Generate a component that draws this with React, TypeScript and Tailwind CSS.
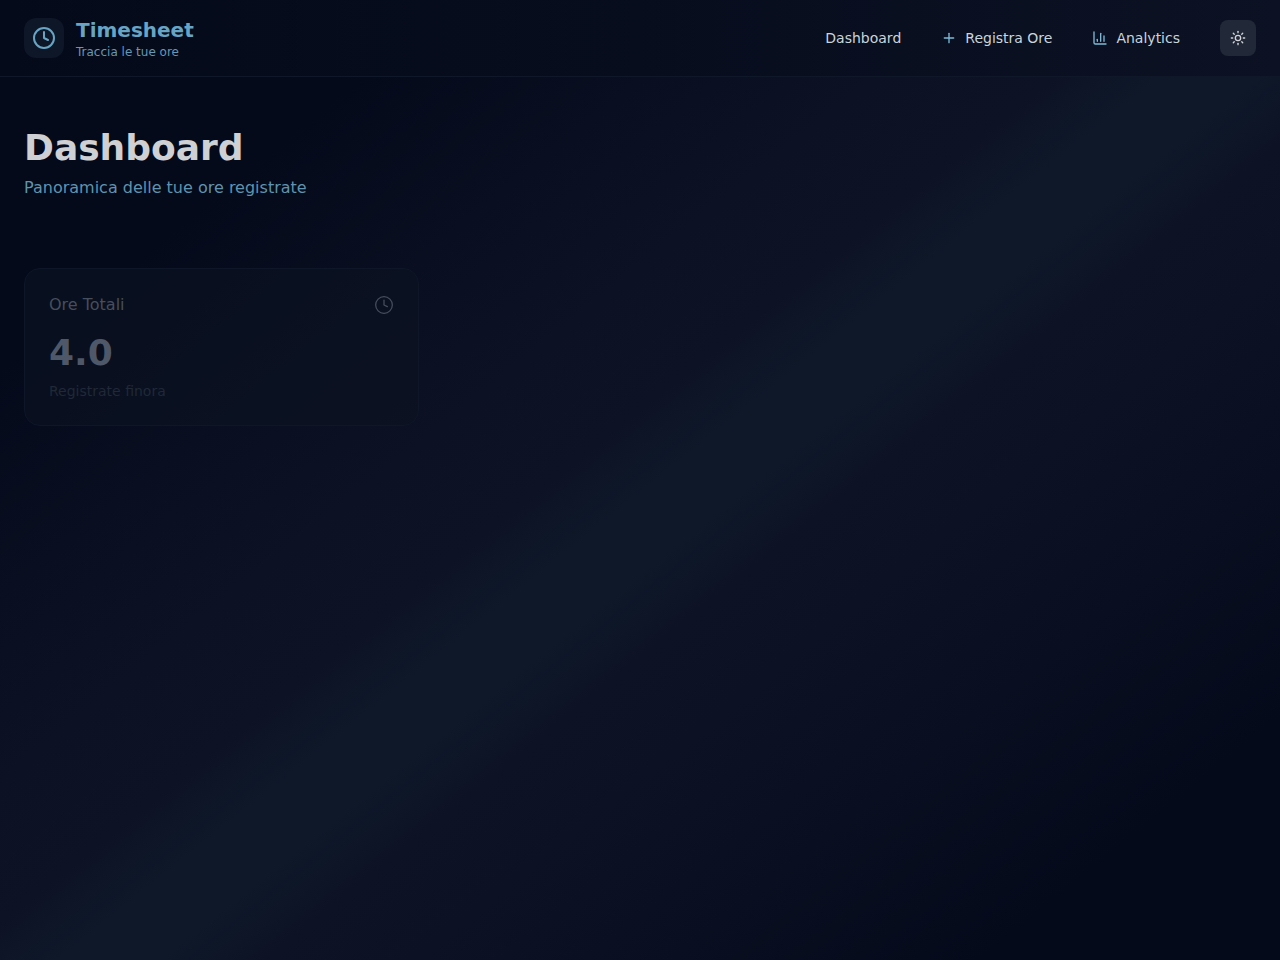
import { useState } from 'react'
import { ChartColumn, Clock, Plus, Sun } from 'lucide-react'

const navLinks = [
  { label: 'Dashboard', href: '#dashboard', icon: null },
  { label: 'Registra Ore', href: '#registra', icon: Plus },
  { label: 'Analytics', href: '#analytics', icon: ChartColumn },
]

function Header() {
  const [dark, setDark] = useState(true)

  return (
    <header className="border-b border-[#0f1829] bg-linear-to-r from-[#040a1a] via-[#070d1d] to-[#0c1223]">
      <div className="flex items-center justify-between px-6 py-4">
        <div className="flex items-center gap-3">
          <div className="flex h-10 w-10 items-center justify-center rounded-xl bg-[#0d1727] text-[#68a4c4]">
            <Clock className="h-6 w-6" />
          </div>
          <div>
            <div className="text-xl font-bold text-[#68a4c4]">Timesheet</div>
            <p className="text-xs text-[#6498b6]">Traccia le tue ore</p>
          </div>
        </div>

        <div className="flex items-center gap-6">
          <nav className="flex items-center gap-2">
            {navLinks.map(({ label, href, icon: Icon }) => (
              <a
                key={label}
                href={href}
                className="flex items-center gap-2 rounded-lg px-4 py-2 text-sm font-medium text-[#c9d5dc]"
              >
                {Icon && <Icon className="h-4 w-4 text-[#7dbbd8]" />}
                {label}
              </a>
            ))}
          </nav>
          <button
            type="button"
            aria-label="Cambia tema"
            aria-pressed={dark}
            onClick={() => setDark(!dark)}
            className="flex h-9 w-9 items-center justify-center rounded-lg bg-[#212939] text-[#d2d4d8]"
          >
            <Sun className="h-4 w-4" />
          </button>
        </div>
      </div>
    </header>
  )
}

function StatCard({ title, value, note }: { title: string; value: string; note: string }) {
  return (
    <div className="rounded-2xl border border-[#0d1727] bg-[#0b1222]/60 p-6">
      <div className="mb-4 flex items-center justify-between">
        <h2 className="text-base text-[#464e5d]">{title}</h2>
        <Clock className="h-5 w-5 text-[#464e5d]" strokeWidth={1.5} />
      </div>
      <p className="mb-2 text-4xl font-bold text-[#4f5869]">{value}</p>
      <p className="text-sm text-[#1f2937]">{note}</p>
    </div>
  )
}

export default function App() {
  return (
    <div className="min-h-screen bg-[linear-gradient(to_bottom_right,#040a1a_18%,#090f20_29%,#0c1223_38%,#0d1325_45%,#0e1829_49%,#0e1829_53%,#0d1325_57%,#0c1223_63%,#090f20_73%,#040a1a_85%)] bg-size-[100%_107%] bg-no-repeat font-['DejaVu_Sans',sans-serif]">
      <Header />
      <main className="px-6 pt-[51px] pb-12">
        <h1 className="mb-2 text-4xl font-bold text-[#cfd0d3]">Dashboard</h1>
        <p className="text-base text-[#5f93af]">Panoramica delle tue ore registrate</p>
        <section className="mt-17 grid grid-cols-1 gap-6 md:grid-cols-3">
          <StatCard title="Ore Totali" value="4.0" note="Registrate finora" />
        </section>
      </main>
    </div>
  )
}
